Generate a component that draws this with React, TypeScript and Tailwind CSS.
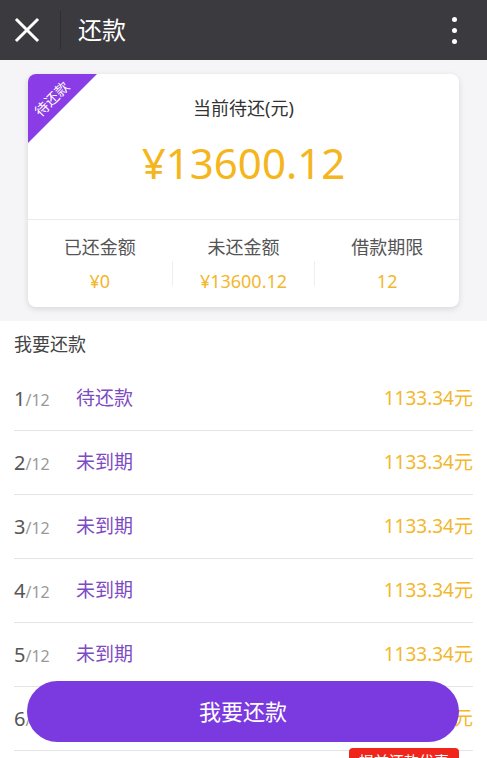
import React from "react";

const font = { fontFamily: '"Noto Sans", "Noto Sans CJK SC", sans-serif' };

const rows = [
  { n: 1, status: "待还款", amount: "1133.34元" },
  { n: 2, status: "未到期", amount: "1133.34元" },
  { n: 3, status: "未到期", amount: "1133.34元" },
  { n: 4, status: "未到期", amount: "1133.34元" },
  { n: 5, status: "未到期", amount: "1133.34元" },
  { n: 6, status: "未到期", amount: "1133.34元" },
];

const App = () => {
  return (
    <div className="relative h-[758px] w-[487px] overflow-hidden bg-white" style={font}>
      {/* Top bar */}
      <div className="flex h-[60px] items-center bg-[#3b3a3f]">
        <div className="flex w-[60px] items-center justify-center">
          <svg width="26" height="26" viewBox="0 0 26 26" className="-ml-[6px]">
            <path d="M3 3 L23 23 M23 3 L3 23" stroke="#fff" strokeWidth="3" strokeLinecap="square" />
          </svg>
        </div>
        <div className="h-[38px] w-px bg-[#2f2e33]" />
        <div className="ml-[17px] text-[24px] text-white">还款</div>
        <div className="ml-auto mr-[30px] flex flex-col gap-[6px]">
          <span className="h-[5px] w-[5px] rounded-full bg-white" />
          <span className="h-[5px] w-[5px] rounded-full bg-white" />
          <span className="h-[5px] w-[5px] rounded-full bg-white" />
        </div>
      </div>

      {/* Summary */}
      <div className="bg-[#f5f5f7] px-[28px] pt-[14px] pb-[14px]">
        <div className="relative overflow-hidden rounded-[8px] bg-white shadow-[0_2px_6px_rgba(0,0,0,0.12)]">
          <div className="absolute left-0 top-0 h-[69px] w-[69px] bg-[#8a3ce6] [clip-path:polygon(0_0,100%_0,0_100%)]" />
          <div className="absolute left-[3px] top-[18px] -rotate-45 text-[14px] leading-none text-white">
            待还款
          </div>
          <div className="pt-[21px] text-center text-[18px] leading-[26px] text-[#333]">当前待还(元)</div>
          <div className="mt-[14px] text-center text-[42px] leading-[56px] text-[#f5b51c]">¥13600.12</div>
          <div className="mt-[28px] border-t border-[#ebebeb]" />
          <div className="grid h-[87px] grid-cols-3 items-center">
            <div className="text-center">
              <div className="text-[18px] leading-[26px] text-[#555]">已还金额</div>
              <div className="mt-[8px] text-[18px] leading-[26px] text-[#f3b72b]">¥0</div>
            </div>
            <div className="relative text-center">
              <span className="absolute left-0 top-[27px] h-[25px] w-px bg-[#eee]" />
              <div className="text-[18px] leading-[26px] text-[#555]">未还金额</div>
              <div className="mt-[8px] text-[18px] leading-[26px] text-[#f3b72b]">¥13600.12</div>
              <span className="absolute right-0 top-[27px] h-[25px] w-px bg-[#eee]" />
            </div>
            <div className="text-center">
              <div className="text-[18px] leading-[26px] text-[#555]">借款期限</div>
              <div className="mt-[8px] text-[18px] leading-[26px] text-[#f3b72b]">12</div>
            </div>
          </div>
        </div>
      </div>

      {/* Installments */}
      <div className="px-[14px]">
        <div className="flex h-[46px] items-center text-[18px] text-[#444]">我要还款</div>
        {rows.map((row) => (
          <div key={row.n} className="flex h-[64px] items-center border-b border-[#e4e4e4]">
            <div className="flex w-[62px] items-baseline">
              <span className="text-[20px] text-[#555]">{row.n}</span>
              <span className="text-[16px] text-[#999]">/12</span>
            </div>
            <div className="text-[19px] text-[#7d4bc2]">{row.status}</div>
            <div className="ml-auto text-[19px] text-[#f3b72b]">{row.amount}</div>
          </div>
        ))}
      </div>

      {/* Bottom action */}
      <div className="absolute bottom-[16px] left-[27px] right-[28px] flex h-[61px] items-center justify-center rounded-full bg-[#7b3adf] text-[22px] text-white">
        我要还款
      </div>
      <div className="absolute left-[349px] top-[748px] h-[26px] w-[110px] rounded-[4px] bg-[#f0261c] pt-[2px] text-center text-[15px] leading-[22px] text-white">
        提前还款优惠
      </div>
    </div>
  );
};

export default App;
